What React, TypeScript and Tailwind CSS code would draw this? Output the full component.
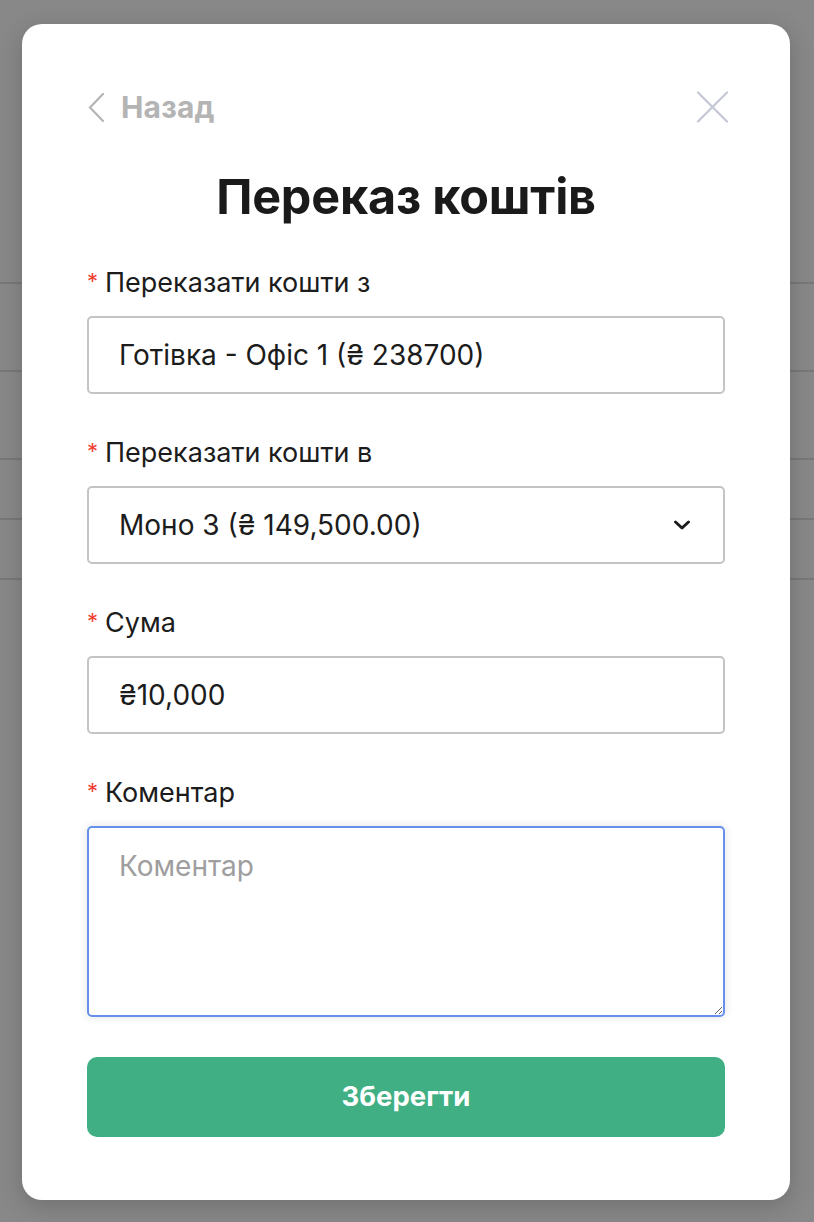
import { useState } from "react";

function Label({ text }: { text: string }) {
  return (
    <div className="flex items-center h-[32px] text-[27px] leading-[32px] text-[#1c1c1c]">
      <span className="text-[#f04134] text-[22px] mr-[7px] -mt-[4px]">*</span>
      {text}
    </div>
  );
}

export default function App() {
  const [comment, setComment] = useState("");

  return (
    <div
      className="relative w-[814px] h-[1222px] overflow-hidden bg-[#888888]"
      style={{ fontFamily: "Inter, 'Noto Sans', sans-serif" }}
    >
      {/* background page rows, dimmed by the overlay */}
      <div className="flex flex-col">
        <div className="h-[282px]" />
        <div className="h-[88px] border-t-2 border-[#787878]" />
        <div className="h-[88px] border-t-2 border-[#787878]" />
        <div className="h-[60px] border-t-2 border-[#787878]" />
        <div className="h-[60px] border-t-2 border-[#787878]" />
        <div className="h-[60px] border-t-2 border-[#787878]" />
      </div>

      {/* Modal */}
      <div className="absolute left-[22px] top-[24px] w-[768px] h-[1176px] bg-white rounded-[20px] shadow-[0_6px_24px_rgba(0,0,0,0.18)] px-[65px] pt-[67px]">
        <div className="flex items-center justify-between h-[32px]">
          <button className="flex items-center gap-[16px] text-[#b4b4b4] font-bold text-[30px] leading-[32px] tracking-[0.2px]">
            <svg width="18" height="31" viewBox="0 0 18 31" fill="none" stroke="#b4b4b4" strokeWidth="2.2" strokeLinecap="round">
              <path d="M16 2 L3 15.5 L16 29" />
            </svg>
            Назад
          </button>
          <button className="-mr-[4px]">
            <svg width="33" height="32" viewBox="0 0 33 32" fill="none" stroke="#c4c7d4" strokeWidth="2.2" strokeLinecap="round">
              <path d="M2 1.5 L31 30.5 M31 1.5 L2 30.5" />
            </svg>
          </button>
        </div>

        <h1 className="mt-[45px] text-center text-[48.5px] leading-[58px] font-bold text-[#1a1a1a] tracking-[-0.2px]">
          Переказ коштів
        </h1>

        <div className="mt-[41px] flex flex-col">
          <Label text="Переказати кошти з" />
          <div className="mt-[17px] h-[78px] border-2 border-[#c4c4c4] rounded-[5px] flex items-center pl-[30px] text-[28px] text-[#1c1c1c]">
            Готівка - Офіс 1 (₴ 238700)
          </div>

          <div className="mt-[43px]">
            <Label text="Переказати кошти в" />
          </div>
          <div className="mt-[17px] h-[78px] border-2 border-[#c4c4c4] rounded-[5px] flex items-center justify-between pl-[30px] pr-[32px] text-[28px] text-[#1c1c1c]">
            <span>Моно 3 (₴ 149,500.00)</span>
            <svg width="18" height="12" viewBox="0 0 18 12" fill="none" stroke="#1c1c1c" strokeWidth="3" strokeLinecap="round" strokeLinejoin="round">
              <path d="M2.5 3 L9 9 L15.5 3" />
            </svg>
          </div>

          <div className="mt-[43px]">
            <Label text="Сума" />
          </div>
          <div className="mt-[17px] h-[78px] border-2 border-[#c4c4c4] rounded-[5px] flex items-center pl-[30px] text-[28px] text-[#1c1c1c]">
            ₴10,000
          </div>

          <div className="mt-[43px]">
            <Label text="Коментар" />
          </div>
          <textarea
            value={comment}
            onChange={(e) => setComment(e.target.value)}
            placeholder="Коментар"
            className="mt-[17px] h-[191px] border-2 border-[#6590ec] rounded-[5px] pl-[30px] pt-[19px] text-[28px] leading-[38px] text-[#1c1c1c] placeholder:text-[#9e9e9e] outline-none shadow-[0_0_10px_rgba(0,0,0,0.12)] resize-y"
          />

          <button className="mt-[40px] h-[80px] rounded-[10px] bg-[#40af83] text-white font-bold text-[27.5px]">
            Зберегти
          </button>
        </div>
      </div>
    </div>
  );
}
